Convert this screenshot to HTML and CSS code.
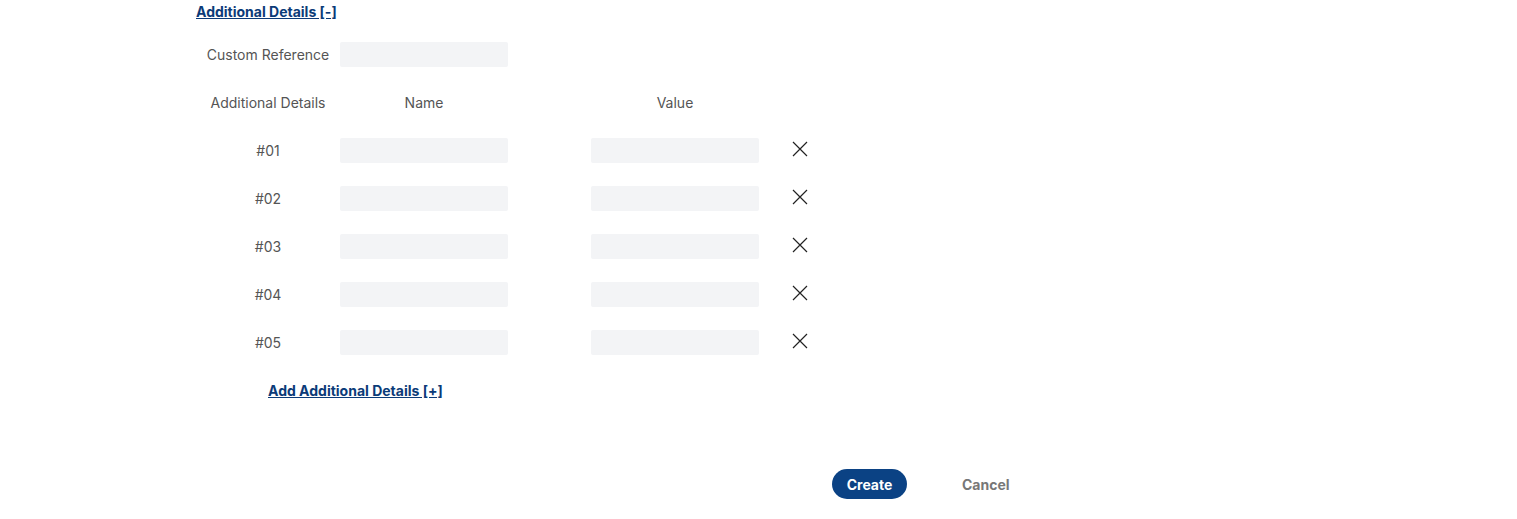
FILE: index.html
```html
<!DOCTYPE html>
<html>
<head>
<meta charset="utf-8">
<link rel="stylesheet" href="styles.css">
</head>
<body>
<div class="page">
  <a class="toggle" href="#">Additional Details [-]</a>
  <div class="row custom">
    <div class="label">Custom Reference</div>
    <div class="input"></div>
  </div>
  <div class="row head">
    <div class="label">Additional Details</div>
    <div class="col">Name</div>
    <div class="col">Value</div>
  </div>
  <div class="row item">
    <div class="label">#01</div>
    <div class="input"></div>
    <div class="input"></div>
    <svg class="x" viewBox="0 0 16 16"><path d="M1 1L15 15M15 1L1 15" stroke="#222" stroke-width="1.2" fill="none"/></svg>
  </div>
  <div class="row item">
    <div class="label">#02</div>
    <div class="input"></div>
    <div class="input"></div>
    <svg class="x" viewBox="0 0 16 16"><path d="M1 1L15 15M15 1L1 15" stroke="#222" stroke-width="1.2" fill="none"/></svg>
  </div>
  <div class="row item">
    <div class="label">#03</div>
    <div class="input"></div>
    <div class="input"></div>
    <svg class="x" viewBox="0 0 16 16"><path d="M1 1L15 15M15 1L1 15" stroke="#222" stroke-width="1.2" fill="none"/></svg>
  </div>
  <div class="row item">
    <div class="label">#04</div>
    <div class="input"></div>
    <div class="input"></div>
    <svg class="x" viewBox="0 0 16 16"><path d="M1 1L15 15M15 1L1 15" stroke="#222" stroke-width="1.2" fill="none"/></svg>
  </div>
  <div class="row item">
    <div class="label">#05</div>
    <div class="input"></div>
    <div class="input"></div>
    <svg class="x" viewBox="0 0 16 16"><path d="M1 1L15 15M15 1L1 15" stroke="#222" stroke-width="1.2" fill="none"/></svg>
  </div>
  <a class="add" href="#">Add Additional Details [+]</a>
  <div class="actions">
    <button class="create">Create</button>
    <button class="cancel">Cancel</button>
  </div>
</div>
</body>
</html>
```
FILE: styles.css
```css
* { box-sizing: border-box; }
body {
  margin: 0;
  background: #fff;
  font-family: Inter, "Noto Sans", sans-serif;
  font-size: 14px;
  color: #555;
}
.page {
  padding: 3px 0 0 196px;
}
.toggle, .add {
  color: #0b3b78;
  font-weight: 700;
  font-size: 14px;
  text-decoration: underline;
  display: inline-block;
  line-height: 18px;
}
.row {
  display: flex;
  align-items: center;
  height: 25px;
}
.custom { margin-top: 21px; }
.head { margin-top: 23px; }
.item { margin-top: 23px; }
.label {
  width: 144px;
  text-align: center;
}
.input {
  width: 168px;
  height: 25px;
  background: #f3f4f6;
  border-radius: 2px;
}
.input + .input { margin-left: 83px; }
.col {
  width: 168px;
  text-align: center;
}
.col + .col { margin-left: 83px; }
.x {
  width: 16px;
  height: 16px;
  margin-left: 33px;
  margin-bottom: 3px;
}
.add {
  margin: 27px 0 0 72px;
}
.actions {
  display: flex;
  align-items: center;
  margin: 69px 0 0 636px;
}
.create {
  width: 75px;
  height: 30px;
  border: none;
  border-radius: 15px;
  background: #0b4284;
  color: #fff;
  font: 700 14px Inter, "Noto Sans", sans-serif;
}
.cancel {
  margin-left: 55px;
  border: none;
  background: none;
  color: #777;
  font: 700 14px Inter, "Noto Sans", sans-serif;
  padding: 0;
}
```
